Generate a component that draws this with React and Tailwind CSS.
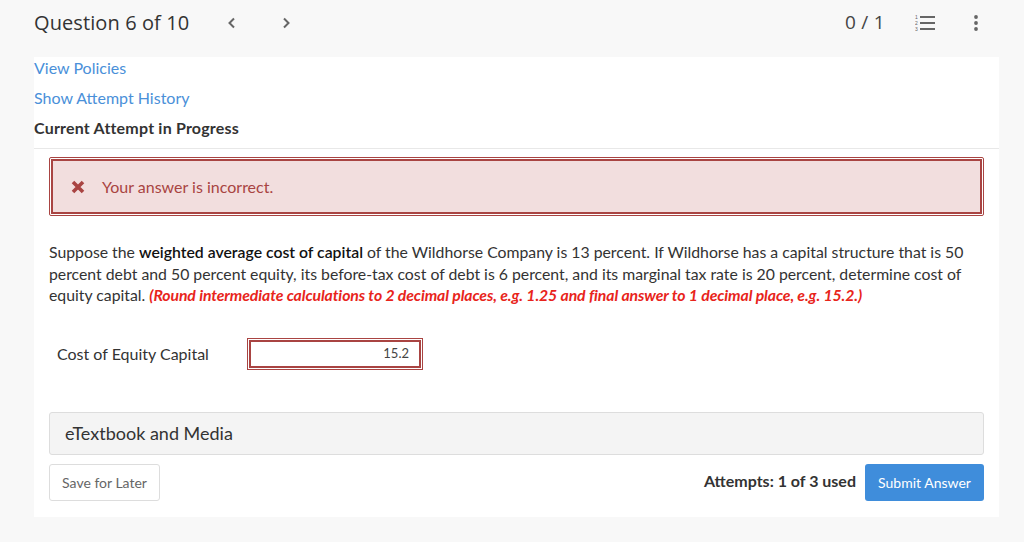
import React from "react";

const lato = { fontFamily: "Lato, 'Open Sans', sans-serif" };

export default function App() {
  return (
    <div className="w-[1024px] h-[542px] bg-[#f8f8f8] overflow-hidden" style={lato}>
      {/* header */}
      <div className="h-[45px] flex items-center pl-[34px] pr-[45px]">
        <div className="text-[20px] text-[#333] tracking-[0.1px]" style={{ fontFamily: "'Open Sans', sans-serif" }}>
          Question 6 of 10
        </div>
        <svg className="ml-[38px]" width="10" height="12" viewBox="0 0 10 12">
          <path d="M7 1.5 L2.5 6 L7 10.5" fill="none" stroke="#666" strokeWidth="2" />
        </svg>
        <svg className="ml-[44px]" width="10" height="12" viewBox="0 0 10 12">
          <path d="M3 1.5 L7.5 6 L3 10.5" fill="none" stroke="#666" strokeWidth="2" />
        </svg>
        <div className="ml-auto text-[19px] text-[#444] tracking-[0.3px]" style={{ fontFamily: "'Open Sans', sans-serif" }}>0 / 1</div>
        <svg className="ml-[30px]" width="21" height="17" viewBox="0 0 21 17">
          <text x="0" y="5" fontSize="5" fill="#666" fontFamily="Arial">1</text>
          <text x="0" y="11" fontSize="5" fill="#666" fontFamily="Arial">2</text>
          <text x="0" y="17" fontSize="5" fill="#666" fontFamily="Arial">3</text>
          <rect x="5" y="2" width="15" height="2" fill="#666" />
          <rect x="5" y="8" width="15" height="2" fill="#666" />
          <rect x="5" y="14" width="15" height="2" fill="#666" />
        </svg>
        <svg className="ml-[37px]" width="6" height="16" viewBox="0 0 6 16">
          <circle cx="3" cy="2" r="1.9" fill="#666" />
          <circle cx="3" cy="8" r="1.9" fill="#666" />
          <circle cx="3" cy="14" r="1.9" fill="#666" />
        </svg>
      </div>

      {/* panel */}
      <div className="ml-[34px] w-[965px] mt-[12px] bg-white pb-[16px]">
        <div className="flex flex-col">
          <a className="text-[16px] text-[#4a90d9] leading-[20px] h-[30px] pt-[1px]">View Policies</a>
          <a className="text-[16px] text-[#4a90d9] leading-[20px] h-[30px] pt-[1px]">Show Attempt History</a>
          <div className="text-[16px] font-bold text-[#333] leading-[20px] h-[31px] pt-[1px] tracking-[0.2px]">Current Attempt in Progress</div>
        </div>
        <div className="h-px bg-[#e8e8e8]" />

        <div className="px-[15px]">
          <div className="mt-[8px] border border-[#a94442] p-px rounded-[2px]">
            <div className="h-[55px] border-2 border-[#a94442] bg-[#f2dede] flex items-center pl-[17px]">
              <svg width="16" height="16" viewBox="0 0 16 16">
                <path d="M3 3 L13 13 M13 3 L3 13" stroke="#a94442" strokeWidth="3.6" strokeLinecap="butt" />
              </svg>
              <span className="ml-[16px] text-[16px] text-[#a94442] pt-px">Your answer is incorrect.</span>
            </div>
          </div>

          <p className="mt-[25px] text-[15.8px] leading-[21.5px] text-[#333] pr-[10px]">
            Suppose the <span className="font-semibold text-[#111]">weighted average cost of capital</span> of the Wildhorse Company is 13 percent. If Wildhorse has a capital structure that is 50 percent debt and 50 percent equity, its before-tax cost of debt is 6 percent, and its marginal tax rate is 20 percent, determine cost of equity capital.{" "}
            <span className="font-bold italic text-[#e8241b] tracking-[-0.1px]">
              (Round intermediate calculations to 2 decimal places, e.g. 1.25 and final answer to 1 decimal place, e.g. 15.2.)
            </span>
          </p>

          <div className="mt-[32px] flex items-center pl-[8px]">
            <div className="text-[16px] text-[#333] w-[190px]">Cost of Equity Capital</div>
            <div className="border border-[#a94442] p-px">
              <div className="w-[172px] h-[28px] border-2 border-[#a94442] bg-white flex items-center justify-end pr-[10px] text-[13px] text-[#444]">
                15.2
              </div>
            </div>
          </div>

          <div className="mt-[42px] h-[43px] bg-[#f4f4f4] border border-[#dddddd] rounded-[3px] flex items-center pl-[15px] text-[18px] text-[#333]">
            eTextbook and Media
          </div>

          <div className="mt-[9px] flex items-center">
            <div className="w-[111px] h-[37px] border border-[#dddddd] rounded-[3px] flex items-center justify-center text-[14px] text-[#666]">
              Save for Later
            </div>
            <div className="ml-auto text-[16px] font-bold text-[#333] pb-[3px]">Attempts: 1 of 3 used</div>
            <div className="ml-[9px] w-[119px] h-[37px] bg-[#3f8ddb] rounded-[3px] flex items-center justify-center text-[14px] text-white">
              Submit Answer
            </div>
          </div>
        </div>
      </div>
    </div>
  );
}
